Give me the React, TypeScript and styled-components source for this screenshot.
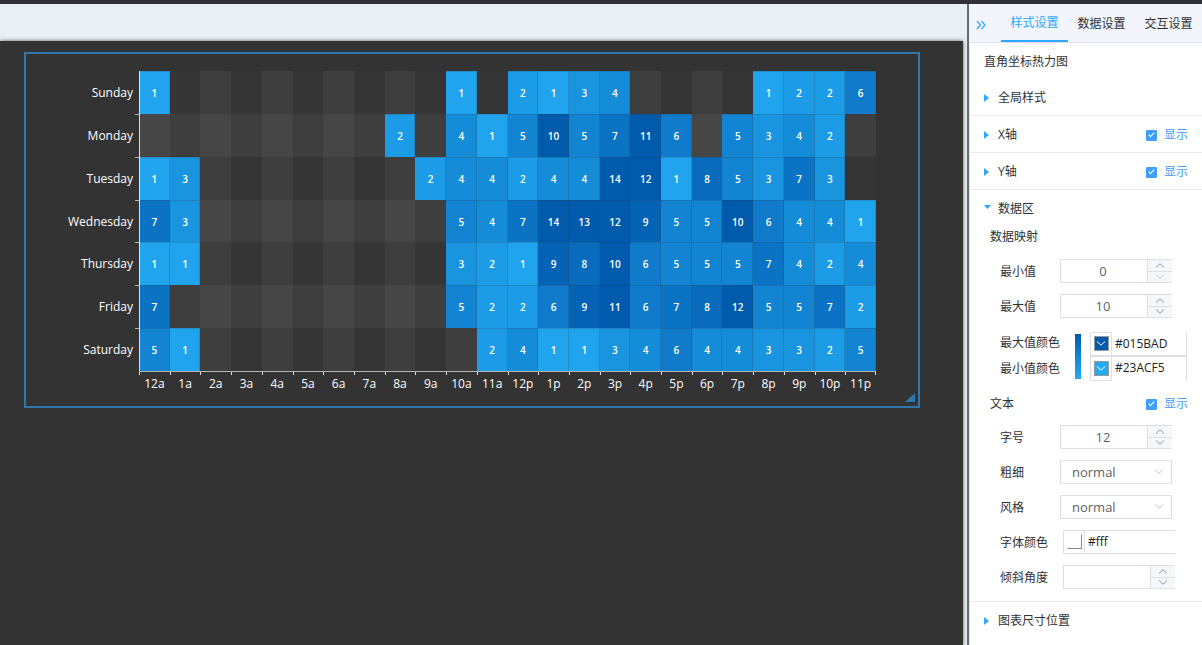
import React, { useId, useState } from 'react';
import styled, { createGlobalStyle } from 'styled-components';

const GlobalStyle = createGlobalStyle`
  *, *::before, *::after { box-sizing: border-box; }
  body {
    margin: 0;
    color: #303133;
    font: 12px/18px 'Open Sans', 'Noto Sans CJK SC', sans-serif;
  }
  button, input, select { margin: 0; padding: 0; font: inherit; color: inherit; }
  button { border: 0; background: none; cursor: pointer; }
`;

const SANS = "'Open Sans', 'Noto Sans CJK SC', sans-serif";
const MAX_COLOR = '#015BAD';
const MIN_COLOR = '#23ACF5';

/* ---------- page frame ---------- */

const Page = styled.div`
  display: flex;
  flex-direction: column;
  min-height: 100vh;
`;

const TopBar = styled.div`
  height: 4px;
  background: #322f35;
`;

const Body = styled.div`
  display: flex;
  flex: 1;
`;

const Workspace = styled.main`
  display: flex;
  flex: 1;
  min-width: 0;
  padding: 37px 4px 0 0;
  background: #e8f0f4;
  overflow: hidden;
`;

const Stage = styled.div`
  flex: 1;
  min-width: 0;
  padding: 11px 43px 24px 24px;
  background: #333;
  box-shadow: 0 0 4px rgba(0, 0, 0, 0.6);
`;

const ChartFrame = styled.div`
  border: 2px solid #2e78ad;
`;

const ChartSvg = styled.svg`
  display: block;
  width: 100%;
  height: auto;
  font-family: ${SANS};
`;

const AxisText = styled.text`
  fill: #fff;
  font-size: 12px;
`;

const CellText = styled.text`
  fill: #fff;
  font-size: 10px;
  font-weight: 600;
  text-anchor: middle;
`;

/* ---------- heat map ---------- */

const HOURS = [
  '12a', '1a', '2a', '3a', '4a', '5a', '6a', '7a', '8a', '9a', '10a', '11a',
  '12p', '1p', '2p', '3p', '4p', '5p', '6p', '7p', '8p', '9p', '10p', '11p',
];

const DAYS: { name: string; values: number[] }[] = [
  { name: 'Sunday', values: [1, 0, 0, 0, 0, 0, 0, 0, 0, 0, 1, 0, 2, 1, 3, 4, 0, 0, 0, 0, 1, 2, 2, 6] },
  { name: 'Monday', values: [0, 0, 0, 0, 0, 0, 0, 0, 2, 0, 4, 1, 5, 10, 5, 7, 11, 6, 0, 5, 3, 4, 2, 0] },
  { name: 'Tuesday', values: [1, 3, 0, 0, 0, 0, 0, 0, 0, 2, 4, 4, 2, 4, 4, 14, 12, 1, 8, 5, 3, 7, 3, 0] },
  { name: 'Wednesday', values: [7, 3, 0, 0, 0, 0, 0, 0, 0, 0, 5, 4, 7, 14, 13, 12, 9, 5, 5, 10, 6, 4, 4, 1] },
  { name: 'Thursday', values: [1, 1, 0, 0, 0, 0, 0, 0, 0, 0, 3, 2, 1, 9, 8, 10, 6, 5, 5, 5, 7, 4, 2, 4] },
  { name: 'Friday', values: [7, 0, 0, 0, 0, 0, 0, 0, 0, 0, 5, 2, 2, 6, 9, 11, 6, 7, 8, 12, 5, 5, 7, 2] },
  { name: 'Saturday', values: [5, 1, 0, 0, 0, 0, 0, 0, 0, 0, 0, 2, 4, 1, 1, 3, 4, 6, 4, 4, 3, 3, 2, 5] },
];

const PLOT = { x: 113, y: 17, width: 737, height: 300 };
const CELL_W = PLOT.width / HOURS.length;
const CELL_H = PLOT.height / DAYS.length;
const LIGHT_BAND = 'rgba(250,250,250,0.05)';
const DARK_BAND = 'rgba(200,200,200,0.01)';

const channels = (hex: string) => [1, 3, 5].map((i) => parseInt(hex.slice(i, i + 2), 16));

function heatColor(value: number) {
  const t = Math.min(value, 10) / 10;
  const low = channels(MIN_COLOR);
  const high = channels(MAX_COLOR);
  return `rgb(${low.map((c, i) => Math.round(c + (high[i] - c) * t)).join(',')})`;
}

const colX = (i: number) => Math.round(PLOT.x + i * CELL_W);
const rowY = (i: number) => Math.round(PLOT.y + i * CELL_H);

function HeatMap() {
  const bottom = PLOT.y + PLOT.height;
  return (
    <ChartSvg viewBox="0 0 892 352" role="img" aria-label="直角坐标热力图">
      {HOURS.map((h, i) => (
        <rect key={h} x={colX(i)} y={PLOT.y} width={colX(i + 1) - colX(i)} height={PLOT.height} fill={i % 2 ? DARK_BAND : LIGHT_BAND} />
      ))}
      {DAYS.map((d, i) => (
        <rect key={d.name} x={PLOT.x} y={rowY(i)} width={PLOT.width} height={rowY(i + 1) - rowY(i)} fill={i % 2 ? LIGHT_BAND : DARK_BAND} />
      ))}
      {DAYS.map((d, r) =>
        d.values.map((v, c) =>
          v ? (
            <g key={`${r}-${c}`}>
              <rect x={colX(c)} y={rowY(r)} width={colX(c + 1) - colX(c)} height={rowY(r + 1) - rowY(r)} fill={heatColor(v)} />
              <path d={`M${colX(c)} ${rowY(r) + 0.5}H${colX(c + 1) - 0.5}V${rowY(r + 1)}`} fill="none" stroke="#333" strokeOpacity="0.2" />
              <CellText x={PLOT.x + (c + 0.5) * CELL_W} y={rowY(r) + 26}>{v}</CellText>
            </g>
          ) : null,
        ),
      )}
      <path d={`M${PLOT.x + 0.5} ${PLOT.y}V${bottom + 4}`} stroke="#fff" strokeOpacity="0.8" />
      <path d={`M${PLOT.x} ${bottom + 0.5}H${PLOT.x + PLOT.width}`} stroke="#b4b4b4" />
      {DAYS.map((d, i) => (
        <g key={d.name}>
          {i > 0 && <path d={`M${PLOT.x - 4} ${rowY(i) + 0.5}h4`} stroke="#b4b4b4" />}
          <AxisText x={PLOT.x - 6} y={rowY(i) + 26} textAnchor="end">{d.name}</AxisText>
        </g>
      ))}
      {HOURS.map((h, i) => (
        <g key={h}>
          <path d={`M${colX(i + 1) + (i === 23 ? -0.5 : 0.5)} ${bottom + 1}v3`} stroke="#ddd" />
          <AxisText x={PLOT.x + (i + 0.5) * CELL_W} y={bottom + 17} textAnchor="middle">{h}</AxisText>
        </g>
      ))}
      <path d="M879 348L889 339V348Z" fill="#2e78ad" />
    </ChartSvg>
  );
}

/* ---------- settings panel ---------- */

const Panel = styled.aside`
  flex: none;
  width: 235px;
  border-left: 2px solid #6a6a6a;
  background: #fff;
  box-shadow: inset 1px 0 #e3e8ef;
`;

const PanelHeader = styled.header`
  display: flex;
  height: 39px;
  border-bottom: 1px solid #dce3ec;
  background: #f2f5fb;
`;

const CollapseButton = styled.button`
  display: flex;
  align-items: center;
  justify-content: center;
  width: 32px;
  padding: 3px 8px 0 0;
  color: #2ea7ff;
`;

const Tab = styled.button<{ $active?: boolean }>`
  width: 67px;
  height: 38px;
  padding-top: 2px;
  border-bottom: ${(p) => (p.$active ? '2px solid #2ea7ff' : '0')};
  color: ${(p) => (p.$active ? '#2ea7ff' : '#303133')};
  white-space: nowrap;
`;

const ChartTitle = styled.h1`
  margin: 0;
  padding: 2px 0 0 15px;
  font-size: 12px;
  font-weight: 400;
  line-height: 34px;
`;

const SectionBox = styled.section`
  border-bottom: 1px solid #e8ecf2;
  &:last-child { border-bottom: 0; }
`;

const SectionHead = styled.div`
  display: flex;
  align-items: center;
  justify-content: space-between;
  height: 36px;
  padding: 2px 14px 0 15px;
`;

const SectionToggle = styled.button`
  display: flex;
  align-items: center;
  gap: 9px;
`;

const Caret = styled.span<{ $open?: boolean }>`
  width: 5px;
  height: 8px;
  background: #2ea7ff;
  clip-path: polygon(0 0, 100% 50%, 0 100%);
  ${(p) => p.$open && 'width: 7px; height: 4px; margin: 0 -2px 4px 0; clip-path: polygon(0 0, 100% 0, 50% 100%);'}
`;

const ShowLabel = styled.label`
  display: flex;
  align-items: center;
  gap: 7px;
  color: #409eff;
`;

const CheckBox = styled.input`
  display: grid;
  place-items: center;
  appearance: none;
  width: 11px;
  height: 11px;
  border: 1px solid #409eff;
  border-radius: 1px;
  &:checked { background: #409eff; }
  &:checked::after {
    content: '';
    width: 3px;
    height: 6px;
    margin-bottom: 2px;
    border: solid #fff;
    border-width: 0 1px 1px 0;
    transform: rotate(45deg);
  }
`;

const GroupHead = styled.div<{ $tall?: boolean }>`
  display: flex;
  align-items: center;
  justify-content: space-between;
  height: ${(p) => (p.$tall ? 34 : 20)}px;
  padding: ${(p) => (p.$tall ? 4 : 2)}px 14px 0 21px;
`;

const Fields = styled.div`
  padding: 7px 0 7px 31px;
`;

const Field = styled.div<{ $wide?: boolean }>`
  display: grid;
  grid-template-columns: ${(p) => (p.$wide ? 63 : 60)}px 112px;
  align-items: center;
  height: 35px;
  > label { padding-top: 2px; }
`;

const Spinner = styled.div`
  display: grid;
  grid-template-columns: 1fr 25px;
  height: 24px;
  border: 1px solid #dcdfe6;
  border-right: 0;
  border-radius: 1px;
`;

const NumberBox = styled.input`
  width: 100%;
  min-width: 0;
  padding: 1px 2px 0 0;
  border: 0;
  outline: 0;
  color: #606266;
  font-size: 13px;
  text-align: center;
`;

const Steps = styled.div`
  display: grid;
  grid-template-rows: 11px 11px;
  border-left: 1px solid #dcdfe6;
  background: #f5f7fa;
`;

const StepButton = styled.button<{ $lower?: boolean }>`
  display: grid;
  place-items: center;
  color: #909399;
  border-top: ${(p) => (p.$lower ? '1px solid #dcdfe6' : '0')};
  &:disabled { color: #c6c9cf; }
`;

const SelectWrap = styled.div`
  display: grid;
  align-items: center;
  height: 24px;
  border: 1px solid #dcdfe6;
  border-radius: 1px;
  color: #c0c4cc;
  > * { grid-area: 1 / 1; }
  > svg { justify-self: end; margin-right: 7px; pointer-events: none; }
`;

const SelectBox = styled.select`
  appearance: none;
  width: 100%;
  height: 22px;
  padding: 1px 24px 0 11px;
  border: 0;
  outline: 0;
  background: transparent;
  color: #606266;
  font-size: 13px;
`;

const RangeGrid = styled.div`
  display: grid;
  grid-template-columns: 75px 15px 97px;
  align-items: center;
  height: 49px;
  margin: 0 0 6px 31px;
`;

const RangeLabels = styled.div`
  display: grid;
  grid-template-rows: 26px 26px;
  align-items: center;
`;

const GradientBar = styled.div`
  width: 6px;
  height: 45px;
  background: linear-gradient(${MAX_COLOR}, ${MIN_COLOR});
`;

const SwatchButton = styled.button<{ $color: string }>`
  display: grid;
  place-items: center;
  border-right: 1px solid #dcdfe6;
  &::before {
    content: '';
    grid-area: 1 / 1;
    width: 15px;
    height: 15px;
    border: 1px solid #999;
    border-color: ${(p) => (p.$color === '#fff' ? '#fff #888 #888 #fff' : '#999')};
    background: ${(p) => p.$color};
  }
  > svg { grid-area: 1 / 1; color: #fff; }
`;

const ColorBox = styled.div`
  display: grid;
  grid-template-columns: 21px 1fr;
  height: 24px;
  border: 1px solid #dcdfe6;
  border-right: 0;
`;

const RangeColorBox = styled(ColorBox)<{ $last?: boolean }>`
  height: ${(p) => (p.$last ? 25 : 24)}px;
  border-right: 1px solid #dcdfe6;
  border-${(p) => (p.$last ? 'bottom' : 'top')}-color: #fff;
  > button { box-shadow: 0 ${(p) => (p.$last ? 1 : -1)}px #dcdfe6; }
`;

const HexBox = styled.input`
  min-width: 0;
  width: 100%;
  padding-left: 3px;
  border: 0;
  outline: 0;
  background: transparent;
  color: #222;
`;

function Chevron({ up }: { up?: boolean }) {
  return (
    <svg width="10" height="5" viewBox="0 0 10 5" fill="none" stroke="currentColor" aria-hidden="true">
      <path d={up ? 'M1 4.5L5 0.8L9 4.5' : 'M1 0.5L5 4.2L9 0.5'} />
    </svg>
  );
}

function ShowToggle({ name }: { name: string }) {
  const id = useId();
  return (
    <ShowLabel htmlFor={id}>
      <CheckBox id={id} type="checkbox" defaultChecked aria-label={`${name} 显示`} />
      显示
    </ShowLabel>
  );
}

function Section({ title, open, showable, children }: { title: string; open?: boolean; showable?: boolean; children?: React.ReactNode }) {
  return (
    <SectionBox>
      <SectionHead>
        <SectionToggle type="button" aria-expanded={!!open}>
          <Caret $open={open} />
          {title}
        </SectionToggle>
        {showable && <ShowToggle name={title} />}
      </SectionHead>
      {children}
    </SectionBox>
  );
}

function NumberField({ label, initial, min, wide }: { label: string; initial: string; min?: number; wide?: boolean }) {
  const id = useId();
  const [value, setValue] = useState(initial);
  const step = (by: number) => setValue(String((Number(value) || 0) + by));
  return (
    <Field $wide={wide}>
      <label htmlFor={id}>{label}</label>
      <Spinner>
        <NumberBox id={id} inputMode="numeric" value={value} onChange={(e) => setValue(e.target.value)} />
        <Steps>
          <StepButton type="button" aria-label={`${label} +`} onClick={() => step(1)}><Chevron up /></StepButton>
          <StepButton type="button" $lower aria-label={`${label} -`} disabled={min !== undefined && Number(value) <= min} onClick={() => step(-1)}><Chevron /></StepButton>
        </Steps>
      </Spinner>
    </Field>
  );
}

function SelectField({ label, options }: { label: string; options: string[] }) {
  const id = useId();
  return (
    <Field>
      <label htmlFor={id}>{label}</label>
      <SelectWrap>
        <SelectBox id={id}>
          {options.map((o) => <option key={o}>{o}</option>)}
        </SelectBox>
        <Chevron />
      </SelectWrap>
    </Field>
  );
}

const TextFields = styled.div`
  padding: 0 0 7px 31px;
`;

export default function App() {
  return (
    <>
      <GlobalStyle />
      <Page>
        <TopBar />
        <Body>
          <Workspace>
            <Stage>
              <ChartFrame><HeatMap /></ChartFrame>
            </Stage>
          </Workspace>
          <Panel>
            <PanelHeader>
              <CollapseButton type="button" aria-label="收起">
                <svg width="10" height="10" viewBox="0 0 10 10" fill="none" stroke="currentColor" strokeWidth="1.2">
                  <path d="M1 1L4.6 5L1 9M5.4 1L9 5L5.4 9" />
                </svg>
              </CollapseButton>
              <Tab type="button" $active>样式设置</Tab>
              <Tab type="button">数据设置</Tab>
              <Tab type="button">交互设置</Tab>
            </PanelHeader>
            <ChartTitle>直角坐标热力图</ChartTitle>
            <Section title="全局样式" />
            <Section title="X轴" showable />
            <Section title="Y轴" showable />
            <Section title="数据区" open>
              <GroupHead>数据映射</GroupHead>
              <Fields>
                <NumberField label="最小值" initial="0" min={0} />
                <NumberField label="最大值" initial="10" />
              </Fields>
              <RangeGrid>
                <RangeLabels>
                  <label htmlFor="max-color">最大值颜色</label>
                  <label htmlFor="min-color">最小值颜色</label>
                </RangeLabels>
                <GradientBar />
                <div>
                  <RangeColorBox>
                    <SwatchButton type="button" aria-label="选择最大值颜色" $color={MAX_COLOR}><Chevron /></SwatchButton>
                    <HexBox id="max-color" defaultValue={MAX_COLOR} />
                  </RangeColorBox>
                  <RangeColorBox $last>
                    <SwatchButton type="button" aria-label="选择最小值颜色" $color={MIN_COLOR}><Chevron /></SwatchButton>
                    <HexBox id="min-color" defaultValue={MIN_COLOR} />
                  </RangeColorBox>
                </div>
              </RangeGrid>
              <GroupHead $tall>
                文本
                <ShowToggle name="文本" />
              </GroupHead>
              <TextFields>
                <NumberField label="字号" initial="12" />
                <SelectField label="粗细" options={['normal', 'bold']} />
                <SelectField label="风格" options={['normal', 'italic']} />
                <Field $wide>
                  <label htmlFor="font-color">字体颜色</label>
                  <ColorBox>
                    <SwatchButton type="button" aria-label="选择字体颜色" $color="#fff" />
                    <HexBox id="font-color" defaultValue="#fff" />
                  </ColorBox>
                </Field>
                <NumberField label="倾斜角度" initial="" wide />
              </TextFields>
            </Section>
            <Section title="图表尺寸位置" />
          </Panel>
        </Body>
      </Page>
    </>
  );
}
